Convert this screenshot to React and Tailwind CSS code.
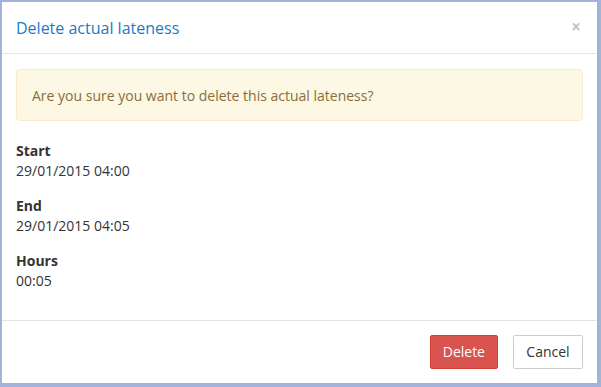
const font = { fontFamily: '"Open Sans", "Noto Sans", sans-serif' };

const details = [
  { label: 'Start', value: '29/01/2015 04:00' },
  { label: 'End', value: '29/01/2015 04:05' },
  { label: 'Hours', value: '00:05' },
];

export default function App() {
  return (
    <div
      className="w-[601px] h-[387px] bg-[#a3b2d8] pt-[2px] pl-[2px] pr-[4px] pb-[4px]"
      style={font}
    >
      <div className="w-full h-full bg-white flex flex-col text-[#333] text-[14px]">
        <div className="h-[52px] flex items-center justify-between pl-[14px] pr-[16px] border-b border-[#e5e5e5]">
          <h4 className="text-[16px] text-[#1b7ac7] leading-none mt-[1px]">Delete actual lateness</h4>
          <button className="text-[#c4c4c4] text-[17px] font-bold leading-none -mt-[3px]">×</button>
        </div>

        <div className="flex-1 px-[14px] pt-[15px]">
          <div className="h-[52px] flex items-center px-[15px] bg-[#fcf8e3] border border-[#faebcc] rounded-[4px] text-[#8a6d3b]">
            Are you sure you want to delete this actual lateness?
          </div>
          <div className="mt-[20px] flex flex-col gap-[15px]">
            {details.map((d) => (
              <div key={d.label} className="leading-[20px]">
                <div className="font-bold">{d.label}</div>
                <div>{d.value}</div>
              </div>
            ))}
          </div>
        </div>

        <div className="h-[63px] border-t border-[#e5e5e5] flex items-center justify-end gap-[15px] pr-[14px] pb-[1px]">
          <button className="h-[34px] px-[12px] bg-[#d9534f] border border-[#d43f3a] rounded-[2px] text-white">
            Delete
          </button>
          <button className="h-[34px] w-[70px] bg-white border border-[#ccc] rounded-[2px] text-[#333]">
            Cancel
          </button>
        </div>
      </div>
    </div>
  );
}
